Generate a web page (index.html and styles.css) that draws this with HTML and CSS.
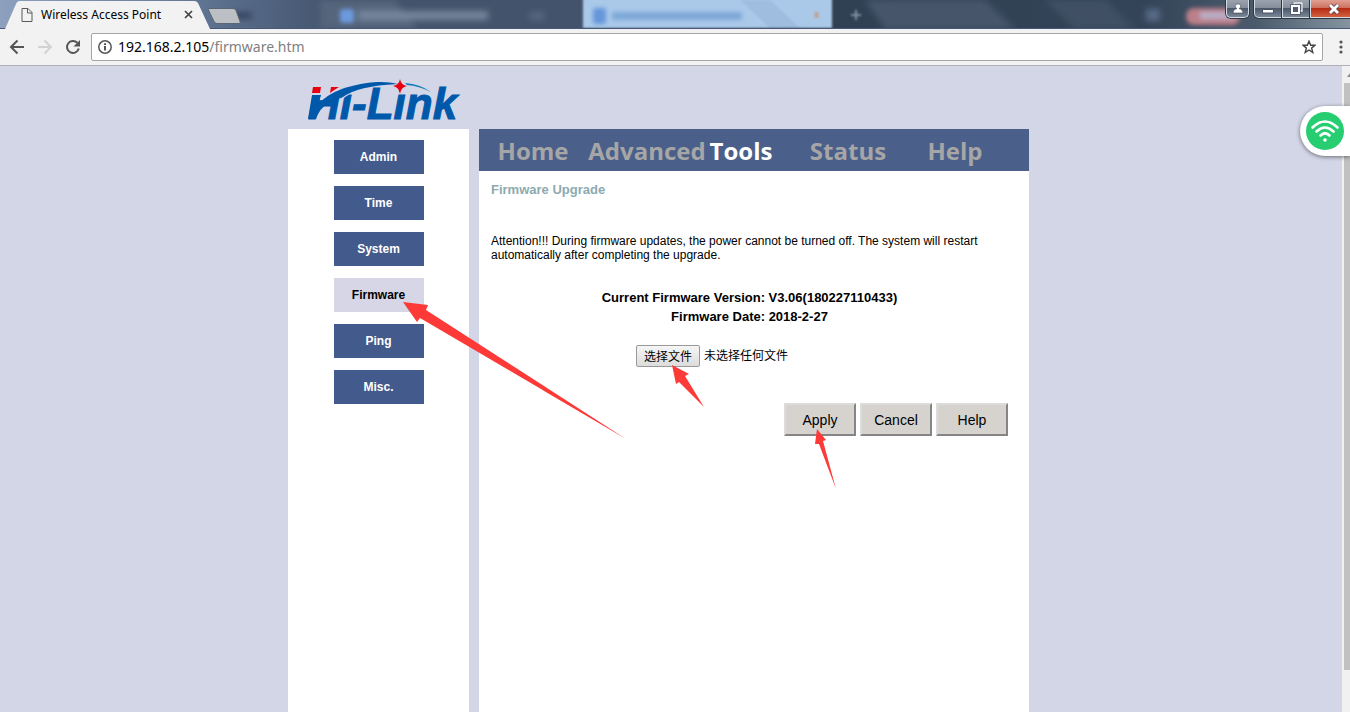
FILE: index.html
```html
<!DOCTYPE html>
<html lang="en">
<head>
    <meta charset="UTF-8">
    <meta name="viewport" content="width=device-width, initial-scale=1.0">
    <title>Wireless Access Point</title>
    <link rel="stylesheet" href="styles.css">
</head>
<body>

    <header class="titlebar">
        <!-- glass frame with the windows behind it showing through -->
        <svg class="glass" width="1350" height="29" viewBox="0 0 1350 29" aria-hidden="true">
            <defs>
                <filter id="soft" x="-20%" y="-50%" width="140%" height="200%"><feGaussianBlur stdDeviation="3"/></filter>
                <filter id="edge" x="-5%" y="-20%" width="110%" height="140%"><feGaussianBlur stdDeviation="1"/></filter>
                <filter id="pill" x="-20%" y="-50%" width="140%" height="200%"><feGaussianBlur stdDeviation="2"/></filter>
                <linearGradient id="frame">
                    <stop offset="0" stop-color="#8da0bd"/>
                    <stop offset="0.12" stop-color="#6b7f9c"/>
                    <stop offset="0.17" stop-color="#586d8b"/>
                    <stop offset="0.25" stop-color="#43536b"/>
                    <stop offset="0.43" stop-color="#43536b"/>
                    <stop offset="0.6" stop-color="#304053"/>
                    <stop offset="0.85" stop-color="#344458"/>
                    <stop offset="0.93" stop-color="#4b5a6b"/>
                    <stop offset="1" stop-color="#8594a0"/>
                </linearGradient>
            </defs>
            <rect width="1350" height="29" fill="url(#frame)"/>
            <g filter="url(#soft)">
                <path d="M320 0h75l22 29h-97z" fill="#55657b"/>
                <path d="M865 0h120l30 29h-130z" fill="#46546a"/>
                <path d="M1045 0h60l30 29h-60z" fill="#405063"/>
                <rect x="232" y="12" width="20" height="7" fill="#34455e"/>
                <rect x="284" y="11" width="12" height="9" fill="#4c5e79"/>
                <rect x="358" y="11" width="130" height="9" fill="#76869c"/>
                <rect x="530" y="12" width="14" height="8" fill="#566982"/>
                <rect x="1146" y="9" width="14" height="12" fill="#566b88"/>
            </g>
            <g filter="url(#edge)">
                <rect x="583" y="-4" width="249" height="32" fill="#aac9e9"/>
                <path d="M740 0h30l30 28h-30z" fill="#9fbedf"/>
                <rect x="814" y="12" width="5" height="6" fill="#b7a99f"/>
                <path d="M856 10v10M851 15h10" stroke="#8191a3" stroke-width="2"/>
            </g>
            <g filter="url(#pill)">
                <rect x="340" y="9" width="14" height="14" rx="3" fill="#6d9add"/>
                <rect x="593" y="8" width="13" height="16" rx="3" fill="#6595db"/>
                <rect x="612" y="12" width="130" height="8" fill="#7fa8d8"/>
                <rect x="1186" y="8" width="54" height="17" rx="8" fill="#bb7f89"/>
                <rect x="1200" y="12" width="34" height="7" fill="#b9adc6"/>
            </g>
            <path d="M0 28.5h1350" stroke="#475878"/>
        </svg>

        <div class="tab">
            <svg class="tab-shape" width="205" height="29" viewBox="0 0 205 29" aria-hidden="true">
                <path d="M0 29L11 4Q12 1 15 1H189Q192 1 193 3L205 29Z" fill="#f2f2f2"/>
            </svg>
            <svg class="tab-icon" width="12" height="14" viewBox="0 0 12 14" aria-hidden="true">
                <path d="M1 .5h6l4 4v9H1zM6.500.5v4.500h4.500" fill="none" stroke="#5a5a5a"/>
            </svg>
            <span class="tab-title">Wireless Access Point</span>
            <button class="tab-close" aria-label="Close tab">
                <svg width="9" height="9" viewBox="0 0 9 9"><path d="M1 1l7 7M8 1l-7 7" stroke="#444" stroke-width="1.700"/></svg>
            </button>
        </div>
        <button class="new-tab" aria-label="New tab">
            <svg width="33" height="16" viewBox="0 0 33 16"><path d="M1 .5h24q2 0 3 2l4 11q1 2-1 2H9q-2 0-3-2L.5 2Q0 .5 1 .5z" fill="#bcbfc4" stroke="#596675"/></svg>
        </button>

        <div class="window-buttons">
            <button class="win user" aria-label="Profile">
                <svg width="12" height="12" viewBox="0 0 12 12"><path d="M6 1a2.300 2.300 0 0 1 1 4.500q4 .5 4 4.500H1q0-4 4-4.500A2.300 2.300 0 0 1 6 1z" fill="#fff" stroke="#3b4454" stroke-width=".6"/></svg>
            </button>
            <button class="win minimize" aria-label="Minimize">
                <svg width="12" height="12" viewBox="0 0 12 12"><path d="M.5 6.500h11v3.500H.5z" fill="#fff" stroke="#4b5566"/></svg>
            </button>
            <button class="win restore" aria-label="Restore">
                <svg width="13" height="13" viewBox="0 0 13 13"><path d="M4 3V1h8v8h-2" fill="none" stroke="#4b5566" stroke-width="2.500"/><path d="M4 3V1h8v8h-2" fill="none" stroke="#fff" stroke-width="1.300"/><path d="M2 4h7v7H2z" fill="none" stroke="#4b5566" stroke-width="3.500"/><path d="M2 4h7v7H2z" fill="none" stroke="#fff" stroke-width="2"/></svg>
            </button>
            <button class="win close" aria-label="Close">
                <svg width="14" height="12" viewBox="0 0 14 12"><path d="M3 2l8 8M11 2l-8 8" stroke="#5d4550" stroke-width="4.500"/><path d="M3 2l8 8M11 2l-8 8" stroke="#fff" stroke-width="2.800"/></svg>
            </button>
        </div>
    </header>

    <div class="toolbar">
        <button class="tool" aria-label="Back">
            <svg width="16" height="16" viewBox="0 0 16 16"><path d="M15 8H2.500M8.500 1.500L2 8l6.500 6.500" fill="none" stroke="#555" stroke-width="2"/></svg>
        </button>
        <button class="tool" aria-label="Forward">
            <svg width="16" height="16" viewBox="0 0 16 16"><path d="M1 8h12.500M7.500 1.500L14 8l-6.500 6.500" fill="none" stroke="#d2d2d2" stroke-width="2"/></svg>
        </button>
        <button class="tool" aria-label="Reload">
            <svg width="16" height="16" viewBox="0 0 16 16"><path d="M13.800 9.500A6 6 0 1 1 12.300 3.800" fill="none" stroke="#555" stroke-width="2"/><path d="M15 1v6.500H8.500z" fill="#555"/></svg>
        </button>
        <div class="address">
            <svg width="14" height="14" viewBox="0 0 14 14" aria-hidden="true"><circle cx="7" cy="7" r="6.200" fill="none" stroke="#555" stroke-width="1.500"/><path d="M7 6v4.500M7 3.300v1.700" stroke="#444" stroke-width="1.800"/></svg>
            <span class="url">192.168.2.105<span class="path">/firmware.htm</span></span>
            <button class="star" aria-label="Bookmark this page">
                <svg width="14" height="14" viewBox="0 0 14 14"><path d="M7 1.200l1.700 4h4.300l-3.400 2.900 1.200 4.400L7 10l-3.800 2.500 1.200-4.400L1 5.200h4.300z" fill="none" stroke="#444" stroke-width="1.400"/></svg>
            </button>
        </div>
        <button class="menu" aria-label="Menu">
            <svg width="4" height="14" viewBox="0 0 4 14"><g fill="#555"><circle cx="2" cy="2" r="1.600"/><circle cx="2" cy="7" r="1.600"/><circle cx="2" cy="12" r="1.600"/></g></svg>
        </button>
    </div>

    <div class="viewport">
        <div class="page">
            <div class="layout">
                <div class="logo">
                    <svg width="170" height="50" viewBox="0 0 170 50" role="img" aria-label="Hi-Link">
                        <text class="logo-text" x="0" y="40">Hi-Link</text>
                        <g fill="#d3d6e7">
                            <path d="M0 0h62v4C46 7 32 12 20 22L14 16H0z"/>
                            <path d="M32 22C40 15 50 10 62 8V4H30z"/>
                            <path d="M92 6h14v9H92z"/>
                        </g>
                        <path d="M4 16h9L10 26C18 16 32 8 59 4 72 2 82 3 90 5 72 6 52 8 38 16 34 20 24 21 18 26 12 30 10 35 8 40H0z" fill="#0058ab"/>
                        <path d="M5 8h8l-1 6H4zM23 8h8q-5 3-9 6z" fill="#e60012"/>
                        <path d="M97 4q15 1 26 9-12-6-24-7z" fill="#0f7cc0"/>
                        <path d="M92 0q1 6 7 7-6 1-7 8-1-7-7-8 6-1 7-7z" fill="#e60012"/>
                    </svg>
                </div>

                <nav class="sidebar">
                    <a href="#admin">Admin</a>
                    <a href="#time">Time</a>
                    <a href="#system">System</a>
                    <a href="#firmware" class="active">Firmware</a>
                    <a href="#ping">Ping</a>
                    <a href="#misc">Misc.</a>
                </nav>

                <main class="main">
                    <nav class="topnav">
                        <a href="#home">Home</a>
                        <a href="#advanced">Advanced</a>
                        <a href="#tools" class="active">Tools</a>
                        <a href="#status">Status</a>
                        <a href="#help">Help</a>
                    </nav>
                    <form class="content">
                        <h1>Firmware Upgrade</h1>
                        <p class="note">Attention!!! During firmware updates, the power cannot be turned off. The system will restart automatically after completing the upgrade.</p>
                        <p class="version">Current Firmware Version: V3.06(180227110433)<br>Firmware Date: 2018-2-27</p>
                        <label class="file" for="firmware">
                            <input type="file" id="firmware">
                            <span class="file-button">选择文件</span>
                            <span>未选择任何文件</span>
                        </label>
                        <div class="actions">
                            <button type="button">Apply</button>
                            <button type="button">Cancel</button>
                            <button type="button">Help</button>
                        </div>
                    </form>
                </main>

                <svg class="arrows" width="741" height="440" viewBox="0 0 741 440" aria-hidden="true">
                    <path d="M115 236L140 239 138 244 338 373 132 252 129 256Z"/>
                    <path d="M384 299L401 308 397 310 416 341 391 316 388 318Z"/>
                    <path d="M529 363L538 374 535 375 548 423 531 378 527 378Z"/>
                </svg>
            </div>
        </div>

        <div class="scrollbar">
            <svg width="6" height="17" viewBox="0 0 6 17" aria-hidden="true"><path d="M6 7v4H3z" fill="#8b8b8b"/></svg>
            <div class="thumb"></div>
        </div>

        <button class="wifi" aria-label="WiFi">
            <svg width="38" height="38" viewBox="0 0 38 38">
                <circle cx="19" cy="19" r="19" fill="#26cd71"/>
                <g fill="none" stroke="#fff" stroke-width="2.600" stroke-linecap="round">
                    <path d="M6.500 15.500Q19 3.500 31.500 15.500"/>
                    <path d="M10.500 19.500Q19 11.500 27.500 19.500"/>
                    <path d="M14.500 23.500Q19 19 23.500 23.500"/>
                </g>
                <circle cx="19" cy="28" r="1.800" fill="#fff"/>
            </svg>
        </button>
    </div>

</body>
</html>
```
FILE: styles.css
```css
* {
    box-sizing: border-box;
}
body {
    margin: 0;
    height: 100vh;
    display: flex;
    flex-direction: column;
    overflow: hidden;
    font-family: "Liberation Sans", Arial, sans-serif;
    font-size: 12px;
    color: #000;
}
button {
    border: none;
    padding: 0;
    background: none;
    font-family: inherit;
}
svg {
    display: block;
}
a {
    text-decoration: none;
}

/* browser frame */
.titlebar {
    position: relative;
    display: flex;
    height: 29px;
    padding-left: 5px;
    background-color: #43536b;
    overflow: hidden;
}
.glass {
    position: absolute;
    left: 0;
    top: 0;
}
.tab {
    position: relative;
    display: flex;
    align-items: center;
    width: 205px;
    padding: 0 17px 0 16px;
}
.tab-shape {
    position: absolute;
    left: 0;
    top: 0;
}
.tab-icon,
.tab-title,
.tab-close {
    position: relative;
}
.tab-title {
    flex: 1;
    margin-left: 8px;
    font-family: "Noto Sans", "Open Sans", sans-serif;
    font-size: 12px;
    white-space: nowrap;
}
.new-tab {
    position: relative;
    align-self: center;
    margin-top: 2px;
    margin-left: -2px;
}
.window-buttons {
    position: relative;
    display: flex;
    margin-left: auto;
}
.win {
    display: flex;
    align-items: center;
    justify-content: center;
    width: 28px;
    height: 18px;
    border: 1px solid #d5dbe2;
    border-top: none;
    background: linear-gradient(#9ba3ae 0, #858e9b 45%, #4d596a 50%, #7a8797 100%);
    box-shadow: 0 0 0 1px #2c3644;
}
.user {
    width: 23px;
    margin-right: 5px;
    border-radius: 0 0 5px 5px;
}
.minimize {
    border-radius: 0 0 0 5px;
}
.close {
    width: 40px;
    padding-left: 6px;
    border-right: none;
    background: linear-gradient(#e0a093 0, #cf7361 45%, #b52c14 50%, #d3603f 100%);
}
.toolbar {
    display: flex;
    align-items: center;
    height: 37px;
    padding: 0 7px 0 9px;
    background-color: #f2f2f2;
    border-bottom: 1px solid #b0b1b8;
}
.tool {
    margin-right: 12px;
}
.address {
    flex: 1;
    display: flex;
    align-items: center;
    height: 28px;
    margin-left: -2px;
    padding: 0 6px;
    border: 1px solid #a6a6a6;
    border-radius: 2px;
    background-color: #fff;
}
.url {
    flex: 1;
    margin-left: 6px;
    padding-bottom: 2px;
    font-family: "Noto Sans", "Open Sans", sans-serif;
    font-size: 14px;
}
.path {
    color: #808080;
}
.menu {
    margin-left: 16px;
}

/* page */
.viewport {
    position: relative;
    flex: 1;
    min-height: 0;
    display: flex;
    background-color: #d3d6e7;
}
.page {
    flex: 1;
    display: flex;
    justify-content: center;
}
.layout {
    position: relative;
    width: 100%;
    max-width: 766px;
    padding-right: 25px;
    display: grid;
    grid-template-columns: 181fr 550fr;
    grid-template-rows: auto 1fr;
    column-gap: 10px;
}
.logo {
    grid-column: span 2;
    height: 63px;
    padding: 13px 0 0 20px;
}
.logo-text {
    font-size: 44px;
    font-weight: bold;
    font-style: italic;
    fill: #0058ab;
    stroke: #0058ab;
    stroke-width: 1px;
}
.sidebar {
    display: flex;
    flex-direction: column;
    align-items: center;
    gap: 12px;
    padding-top: 11px;
    background-color: #fff;
}
.sidebar a {
    width: 90px;
    line-height: 34px;
    text-align: center;
    font-weight: bold;
    color: #fff;
    background-color: #435a8c;
}
.sidebar .active {
    color: #000;
    background-color: #d7d6e6;
}
.main {
    background-color: #fff;
}
.topnav {
    display: grid;
    grid-template-columns: 108px 120px 68px 146px 68px;
    height: 42px;
    line-height: 44px;
    text-align: center;
    font-family: "Open Sans", "Noto Sans", sans-serif;
    font-size: 24px;
    font-weight: bold;
    background-color: #4a608a;
}
.topnav a {
    color: #a6a6a6;
}
.topnav .active {
    color: #fff;
}
.content {
    padding: 11px 21px 0 12px;
}
.content h1 {
    margin: 0;
    font-size: 13px;
    line-height: 16px;
    color: #8caab0;
}
.note {
    margin: 36px 0 0;
    line-height: 14px;
}
.version {
    margin: 26px 0 0;
    font-size: 13px;
    font-weight: bold;
    line-height: 19px;
    text-align: center;
}
.file {
    position: relative;
    display: flex;
    align-items: center;
    gap: 4px;
    width: 227px;
    margin: 19px auto 0;
    font-family: "Liberation Sans", "Noto Sans CJK SC", sans-serif;
    line-height: 22px;
}
.file input {
    position: absolute;
    width: 100%;
    height: 100%;
    opacity: 0;
}
.file-button {
    height: 22px;
    padding: 0 7px;
    border: 1px solid #999;
    border-radius: 2px;
    background: linear-gradient(#f6f6f6, #dcdcdc);
}
.actions {
    display: flex;
    justify-content: flex-end;
    gap: 4px;
    margin-top: 36px;
}
.actions button {
    width: 72px;
    height: 33px;
    border: 2px solid;
    border-color: #dcdcdc #858585 #858585 #dcdcdc;
    background-color: #d6d3ce;
    font-size: 14px;
}

/* red pointers drawn over the page */
.arrows {
    position: absolute;
    left: 0;
    top: 0;
    fill: #fd3a38;
    pointer-events: none;
}
.scrollbar {
    display: flex;
    flex-direction: column;
    width: 8px;
    padding: 0 0 42px 2px;
    background-color: #f1f1f1;
}
.thumb {
    flex: 1;
    background-color: #c1c1c1;
}
.wifi {
    position: absolute;
    right: 0;
    top: 40px;
    width: 50px;
    height: 50px;
    padding-left: 6px;
    border-radius: 25px 0 0 25px;
    background-color: #fff;
    box-shadow: 0 1px 4px rgba(0, 0, 0, 0.5);
}
```
